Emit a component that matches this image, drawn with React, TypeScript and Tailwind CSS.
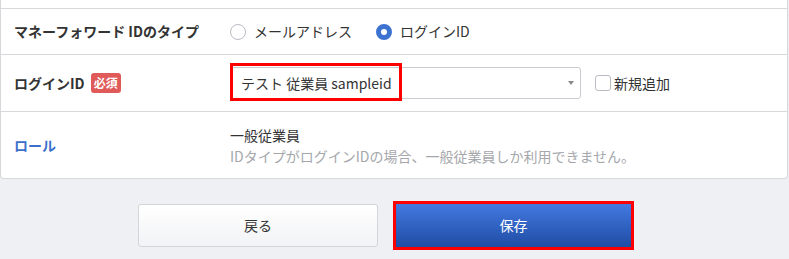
import React from 'react';

const Radio: React.FC<{ label: string; checked?: boolean }> = ({ label, checked }) => (
  <label className="flex items-center gap-2 text-[14px] text-[#333]">
    {checked ? (
      <span className="w-4 h-4 rounded-full border-[5px] border-[#3c73d1] bg-white"></span>
    ) : (
      <span className="w-4 h-4 rounded-full border border-[#b9bcc2] bg-white"></span>
    )}
    {label}
  </label>
);

const App: React.FC = () => {
  return (
    <div className="w-[789px] h-[259px] bg-[#eef0f4] font-['Noto_Sans_CJK_JP','Noto_Sans',sans-serif] text-[#333] overflow-hidden">
      <div className="mr-[1px] bg-white border-x border-b border-[#d6d8dc] rounded-b-[4px]">
        <div className="h-[9px] border-b border-[#d6d8dc]"></div>

        <div className="h-[46px] flex items-center border-b border-[#d6d8dc]">
          <div className="w-[229px] pl-[13px] text-[14px] font-bold">マネーフォワード IDのタイプ</div>
          <div className="flex items-center gap-6">
            <Radio label="メールアドレス" />
            <Radio label="ログインID" checked />
          </div>
        </div>

        <div className="h-[57px] flex items-center border-b border-[#d6d8dc]">
          <div className="w-[229px] pl-[13px] flex items-center gap-[6px]">
            <span className="text-[14px] font-bold">ログインID</span>
            <span className="px-[3px] h-[20px] leading-[20px] rounded-[3px] bg-[#e05a5a] text-white text-[12px] font-bold">
              必須
            </span>
          </div>
          <div className="relative">
            <div className="w-[351px] h-[32px] border border-[#c9cbd0] rounded-[3px] flex items-center justify-between pl-[10px] pr-[6px] text-[14px]">
              <span>テスト 従業員 sampleid</span>
              <span className="w-0 h-0 border-l-[3px] border-r-[3px] border-t-[4px] border-l-transparent border-r-transparent border-t-[#888]"></span>
            </div>
            <div className="absolute left-0 top-[-4px] w-[172px] h-[38px] border-[3px] border-[#ff0000]"></div>
          </div>
          <label className="ml-[14px] flex items-center gap-[3px] text-[14px]">
            <span className="w-4 h-4 rounded-[3px] border border-[#b9bcc2] bg-white"></span>
            新規追加
          </label>
        </div>

        <div className="h-[66px] flex items-center">
          <div className="w-[229px] pl-[13px] text-[14px] font-bold text-[#3c6fcc]">ロール</div>
          <div className="text-[14px] leading-[21px] pt-[1px]">
            <div>一般従業員</div>
            <div className="text-[#a5a7ab]">IDタイプがログインIDの場合、一般従業員しか利用できません。</div>
          </div>
        </div>
      </div>

      <div className="flex gap-[15px] pl-[138px] pt-[25px]">
        <button className="w-[240px] h-[43px] rounded-[3px] border border-[#d3d5d9] bg-gradient-to-b from-white to-[#f2f3f5] text-[14px] text-[#333]">
          戻る
        </button>
        <button className="w-[235px] h-[43px] ml-[3px] bg-gradient-to-b from-[#4479e1] to-[#1e4da4] text-[14px] text-white outline-[3px] outline-solid outline-[#ff0000]">
          保存
        </button>
      </div>
    </div>
  );
};

export default App;
